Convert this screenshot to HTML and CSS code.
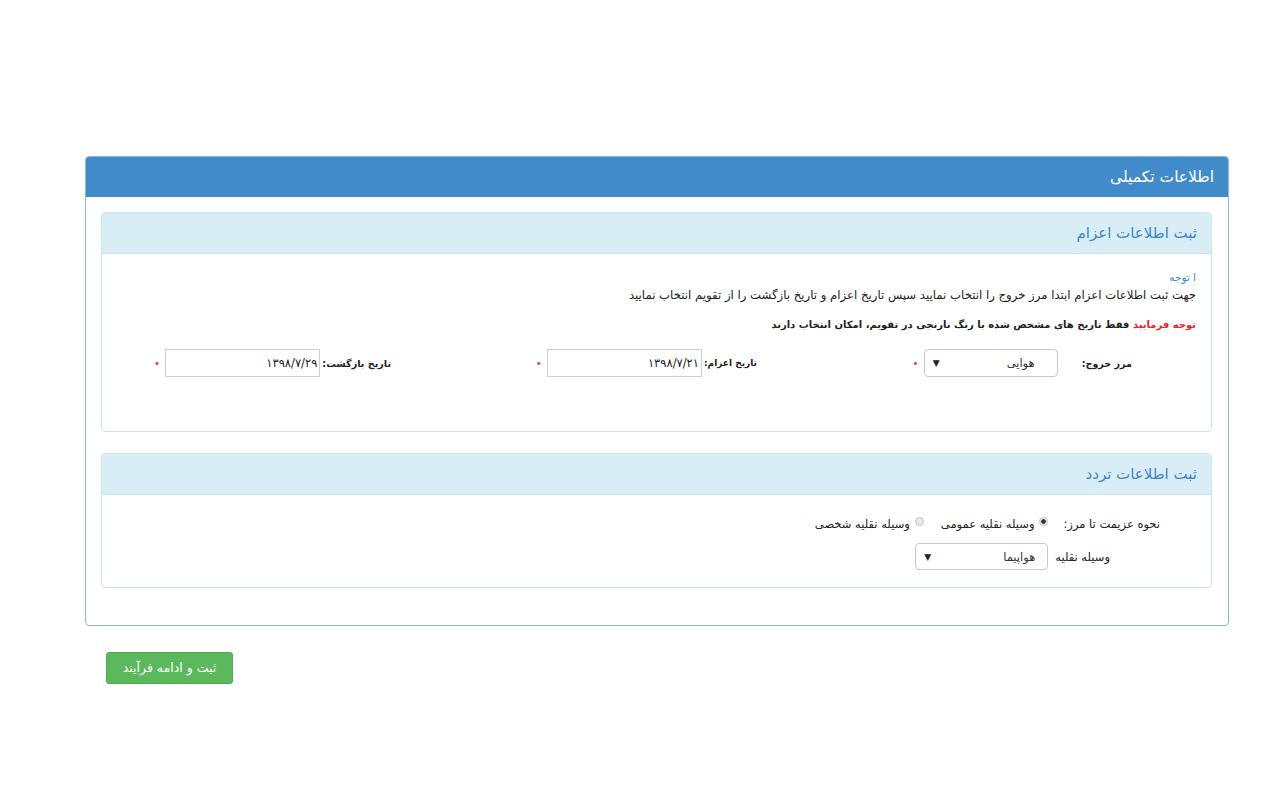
FILE: index.html
```html
<!DOCTYPE html>
<html lang="fa" dir="rtl">
<head>
<meta charset="utf-8">
<link rel="stylesheet" href="styles.css">
</head>
<body>
<div class="page">
  <div class="panel-main">
    <div class="main-head">اطلاعات تکمیلی</div>
    <div class="main-body">
      <div class="panel">
        <div class="panel-head">ثبت اطلاعات اعزام</div>
        <div class="panel-body p1">
          <div class="note-title">ا توجه</div>
          <div class="note-line">جهت ثبت اطلاعات اعزام ابتدا مرز خروج را انتخاب نمایید سپس تاریخ اعزام و تاریخ بازگشت را از تقویم انتخاب نمایید</div>
          <div class="note-bold"><span class="red">توجه فرمایید</span> فقط تاریخ های مشخص شده با رنگ نارنجی در تقویم، امکان انتخاب دارند</div>
          <div class="fields">
            <div class="field f1">
              <span class="lbl">مرز خروج:</span>
              <div class="select s1"><span class="sv">هوایی</span><span class="arrow">▼</span></div>
              <span class="star">•</span>
            </div>
            <div class="field f2">
              <span class="lbl">تاریخ اعزام:</span>
              <div class="date">۱۳۹۸/۷/۲۱</div>
              <span class="star">•</span>
            </div>
            <div class="field f3">
              <span class="lbl">تاریخ بازگشت:</span>
              <div class="date">۱۳۹۸/۷/۲۹</div>
              <span class="star">•</span>
            </div>
          </div>
        </div>
      </div>
      <div class="panel second">
        <div class="panel-head">ثبت اطلاعات تردد</div>
        <div class="panel-body p2">
          <div class="row1">
            <span class="lbl2">نحوه عزیمت تا مرز:</span>
            <span class="radio on"></span><span class="rtext first">وسیله نقلیه عمومی</span>
            <span class="radio"></span><span class="rtext">وسیله نقلیه شخصی</span>
          </div>
          <div class="row2">
            <span class="lbl3">وسیله نقلیه</span>
            <div class="select s2"><span class="sv">هواپیما</span><span class="arrow">▼</span></div>
          </div>
        </div>
      </div>
    </div>
  </div>
  <div class="actions">
    <div class="btn">ثبت و ادامه فرآیند</div>
  </div>
</div>
</body>
</html>
```
FILE: styles.css
```css
html, body {
  margin: 0;
  padding: 0;
  background: #ffffff;
}
body {
  font-family: "DejaVu Sans", "Noto Sans", sans-serif;
  color: #222;
  font-size: 11px;
}
.page {
  width: 1144px;
  margin-right: 51px;
  margin-left: auto;
  padding-top: 156px;
}
.panel-main {
  border: 1px solid #8db8dc;
  border-radius: 4px;
  overflow: hidden;
}
.main-head {
  background: #428bca;
  color: #ffffff;
  height: 40px;
  line-height: 40px;
  font-size: 15.5px;
  padding-right: 14px;
}
.main-body {
  padding: 15px 16px 37px 15px;
}
.panel {
  border: 1px solid #c9e6f0;
  border-radius: 4px;
  overflow: hidden;
}
.panel.second {
  margin-top: 21px;
}
.panel-head {
  background: #d9edf7;
  color: #3f86c4;
  height: 40px;
  line-height: 40px;
  font-size: 15px;
  padding-right: 14px;
  border-bottom: 1px solid #c9e6f0;
}
.panel-body.p1 {
  padding: 15px 15px 0 15px;
  height: 177px;
  box-sizing: border-box;
}
.note-title {
  color: #3f86c4;
  font-size: 10.5px;
  line-height: 16px;
}
.note-line {
  line-height: 20px;
  font-size: 11.7px;
}
.note-bold {
  margin-top: 12px;
  font-weight: bold;
  font-size: 10px;
  line-height: 16px;
}
.red {
  color: #e8262a;
}
.fields {
  display: flex;
  margin-top: 16px;
  padding-right: 64px;
}
.field {
  display: flex;
  align-items: center;
  width: 375px;
  flex-shrink: 0;
}
.field.f2 { width: 366px; }
.lbl {
  font-weight: bold;
  font-size: 9.6px;
  margin-left: 2px;
}
.f1 .lbl { margin-left: 24px; }
.f2 .lbl { font-size: 9px; }
.select {
  border: 1px solid #c8c8c8;
  border-radius: 4px;
  height: 28px;
  box-sizing: border-box;
  display: flex;
  align-items: center;
  justify-content: space-between;
  padding: 0 22px 0 8px;
  background: #fff;
}
.s1 { width: 134px; }
.s2 { width: 133px; height: 27px; padding-right: 12px; }
.sv {
  font-size: 11.5px;
  color: #333;
}
.arrow {
  font-size: 9px;
  color: #222;
}
.date {
  width: 155px;
  height: 28px;
  border: 1px solid #cfcfcf;
  box-sizing: border-box;
  line-height: 26px;
  padding-right: 2px;
  font-size: 11.5px;
  color: #222;
}
.star {
  color: #d9534f;
  font-size: 11px;
  margin-right: 5px;
}
.panel-body.p2 {
  height: 92px;
  box-sizing: border-box;
  padding: 20px 51px 0 0;
}
.row1 {
  display: flex;
  align-items: center;
  height: 18px;
}
.lbl2 {
  margin-left: 15px;
  font-size: 11.5px;
}
.radio {
  width: 9px;
  height: 9px;
  border-radius: 50%;
  border: 1px solid #c4c4c4;
  background: #e8e8e8;
  box-sizing: border-box;
  margin-left: 5px;
  position: relative;
  top: -3px;
}
.radio.on {
  background: radial-gradient(circle, #333 0 2px, #e8e8e8 2.5px);
}
.rtext {
  font-size: 11.5px;
  margin-left: 9px;
}
.rtext.first {
  margin-left: 17px;
}
.row2 {
  display: flex;
  align-items: center;
  margin-top: 10px;
  padding-right: 50px;
}
.lbl3 {
  font-size: 11.5px;
  margin-left: 7px;
}
.actions {
  display: flex;
  justify-content: flex-end;
  padding-top: 26px;
  padding-left: 21px;
}
.btn {
  background: #5cb85c;
  color: #fff;
  width: 127px;
  height: 32px;
  line-height: 30px;
  text-align: center;
  border-radius: 3px;
  font-size: 12.5px;
  border: 1px solid #4cae4c;
  box-sizing: border-box;
}
```
